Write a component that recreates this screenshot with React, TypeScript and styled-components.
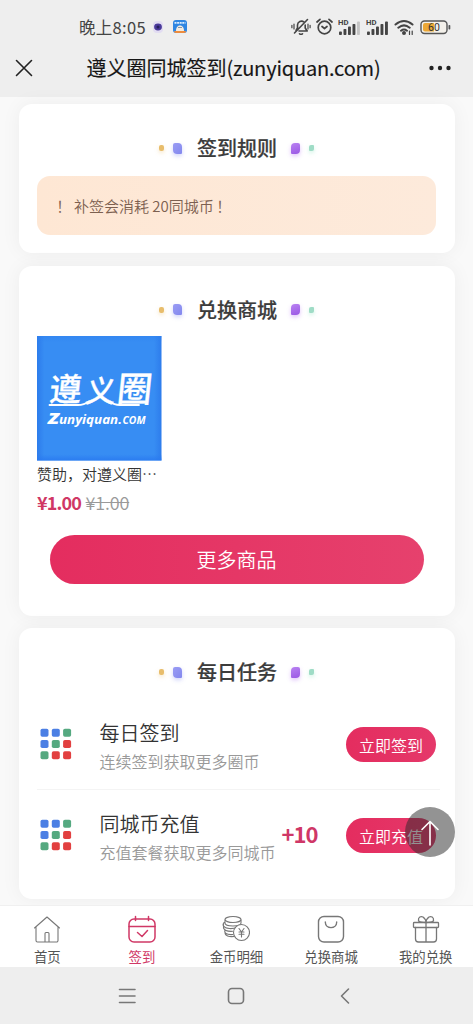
import React from 'react';
import styled, { createGlobalStyle } from 'styled-components';

const cjk = '"Noto Sans CJK SC", "Noto Sans", sans-serif';

const Global = createGlobalStyle`
  * { box-sizing: border-box; }
  body { margin: 0; background: #eee; font-family: ${cjk}; color: #333; }
  button { font-family: inherit; border: 0; padding: 0; }
`;

const Screen = styled.div`
  width: 473px;
  height: 1024px;
  display: flex;
  flex-direction: column;
  overflow: hidden;
  background: #eee;
`;

const StatusBar = styled.div`
  height: 46px;
  padding: 8px 22px 0 79px;
  display: flex;
  justify-content: space-between;
  align-items: center;
`;

const StatusGroup = styled.div<{ $gap: number }>`
  display: flex;
  align-items: center;
  gap: ${(p) => p.$gap}px;
`;

const Clock = styled.span`
  font-size: 16.5px;
  line-height: 20px;
  letter-spacing: 0.3px;
  color: #444;
  margin-right: -3px;
`;

const TitleBar = styled.header`
  height: 51px;
  padding: 0 21px 7px 15px;
  display: grid;
  grid-template-columns: 24px 1fr 24px;
  align-items: center;
`;

const PageTitle = styled.h1`
  margin: 0;
  font-size: 20px;
  line-height: 28px;
  font-weight: 400;
  color: #161616;
  text-align: center;
  white-space: nowrap;
  -webkit-text-stroke: 0.15px #161616;
`;

const Domain = styled.span`
  letter-spacing: -0.18px;
`;

const Content = styled.main`
  height: 808px;
  padding: 7px 18.5px 0 18.5px;
  display: flex;
  flex-direction: column;
  gap: 12.5px;
  background: #f9f9f9;
`;

const Card = styled.section<{ $h: number }>`
  height: ${(p) => p.$h}px;
  flex: none;
  padding: 30px 18.5px 0;
  border-radius: 13px;
  background: #fff;
  box-shadow: 0 0 20px rgba(0, 0, 0, 0.05);
`;

const Heading = styled.div`
  height: 28px;
  display: flex;
  align-items: center;
  justify-content: center;
`;

const HeadingText = styled.h2`
  margin: 0 9.5px 0 10.5px;
  font-size: 20px;
  line-height: 28px;
  font-weight: 500;
  color: #3c3c3c;
  -webkit-text-stroke: 0.2px #3c3c3c;
`;

const Petal = styled.i<{ $w: number; $h: number; $fill: string; $radius: string; $glow: string }>`
  width: ${(p) => p.$w}px;
  height: ${(p) => p.$h}px;
  margin: 0 4.5px;
  border-radius: ${(p) => p.$radius};
  background: ${(p) => p.$fill};
  box-shadow: 0 2px 4px ${(p) => p.$glow};
`;

const Notice = styled.p`
  margin: 14px 0 0;
  height: 59px;
  padding: 0 15.5px 1px;
  display: flex;
  align-items: center;
  border-radius: 13px;
  background: linear-gradient(90deg, #fee7d4, #fdeadb);
  font-size: 15px;
  font-weight: 350;
  letter-spacing: -0.03px;
  color: #7c6050;
  white-space: pre;
`;

const Mark = styled.span`
  font-family: "Noto Sans CJK JP", sans-serif;
`;

const LastMark = styled(Mark)`
  margin-left: -1px;
`;

const Product = styled.article`
  width: 124.5px;
  margin-top: 12.5px;
`;

const Cover = styled.svg`
  display: block;
  width: 124.5px;
  height: 124.5px;
`;

const ProductName = styled.div`
  margin-top: 2.5px;
  font-size: 15px;
  line-height: 22px;
  font-weight: 350;
  color: #333;
  white-space: nowrap;
`;

const Prices = styled.div`
  margin-top: 5px;
  display: flex;
  gap: 4px;
  line-height: 25px;
`;

const Price = styled.span`
  font-size: 18px;
  letter-spacing: -0.85px;
  padding-right: 0.5px;
  font-weight: 700;
  color: #d03765;
`;

const OldPrice = styled.del`
  font-size: 18px;
  letter-spacing: -0.15px;
  font-weight: 350;
  color: #999;
`;

const MoreButton = styled.button`
  display: block;
  width: 374px;
  height: 49.5px;
  margin: 19.5px 0 0 12.5px;
  padding-top: 1px;
  border-radius: 25px;
  background: linear-gradient(90deg, #e42d5f, #e6416d);
  color: #fff;
  font-size: 20px;
  font-weight: 350;
`;

const TaskList = styled.div`
  margin-top: 13px;
`;

const Task = styled.div<{ $line?: boolean }>`
  height: 91px;
  margin-right: -4px;
  padding: 0 4px 0 3px;
  display: flex;
  align-items: center;
  border-bottom: 1px solid ${(p) => (p.$line ? '#f4f4f4' : 'transparent')};
`;

const TaskText = styled.div`
  width: 182px;
  margin-left: 27.5px;
  padding-top: 3px;
  white-space: nowrap;
`;

const TaskName = styled.div`
  font-size: 20px;
  line-height: 28px;
  font-weight: 350;
  color: #333;
`;

const TaskHint = styled.div`
  font-size: 16px;
  line-height: 24px;
  margin-top: 2px;
  font-weight: 350;
  color: #999;
`;

const Reward = styled.span`
  margin-top: -4px;
  font-size: 22px;
  line-height: 28px;
  letter-spacing: -1px;
  font-weight: 700;
  color: #cf3767;
`;

const TaskButton = styled.button`
  width: 90px;
  height: 35px;
  margin-left: auto;
  padding-top: 1px;
  border-radius: 18px;
  background: linear-gradient(90deg, #e42d5f, #e5386a);
  color: #fff;
  font-size: 16px;
  font-weight: 350;
`;

const BackTop = styled.button`
  position: absolute;
  left: 405px;
  top: 807px;
  width: 50px;
  height: 50px;
  border-radius: 50%;
  background: rgba(40, 40, 40, 0.5);
  svg { display: block; margin: 1px auto 0; }
`;

const Tabs = styled.nav`
  height: 62px;
  flex: none;
  display: grid;
  grid-template-columns: repeat(5, 1fr);
  border-top: 1px solid #f0f0f0;
  background: #fff;
`;

const Tab = styled.div<{ $active?: boolean }>`
  display: flex;
  flex-direction: column;
  align-items: center;
  padding-top: 9px;
  color: ${(p) => (p.$active ? '#d03866' : '#555')};
  font-size: 13.4px;
  line-height: 20px;
  svg { display: block; color: ${(p) => (p.$active ? '#d03866' : '#777')}; margin-bottom: 3px; }
`;

const SystemNav = styled.div`
  height: 57px;
  flex: none;
  padding: 1px 123px 0 117px;
  display: grid;
  grid-template-columns: 20px 18px 10px;
  justify-content: start;
  column-gap: 90px;
  align-items: center;
  svg:last-child { margin-left: 5px; }
`;

const line = {
  fill: 'none',
  stroke: 'currentColor',
  strokeWidth: 1.3,
  strokeLinecap: 'round' as const,
  strokeLinejoin: 'round' as const,
};

function SectionTitle({ children }: { children: string }) {
  return (
    <Heading>
      <Petal $w={5} $h={6} $fill="#e8bd6c" $radius="2px" $glow="rgba(232,180,90,.35)" />
      <Petal $w={9} $h={11} $fill="linear-gradient(135deg,#9a9cf4,#8388ee)" $radius="2px 4px 1px 4px" $glow="rgba(120,130,240,.35)" />
      <HeadingText>{children}</HeadingText>
      <Petal $w={9} $h={11} $fill="linear-gradient(160deg,#b982f2,#9a57e4)" $radius="4px 2px 4px 1px" $glow="rgba(170,90,240,.35)" />
      <Petal $w={5} $h={6} $fill="#9fdcc6" $radius="2px 1px" $glow="rgba(120,220,180,.35)" />
    </Heading>
  );
}

function Signal({ faded }: { faded?: boolean }) {
  return (
    <svg width="23" height="17" viewBox="0 0 23 17">
      <text x="0" y="6.4" fontSize="7.5" fontWeight="700" fontFamily="Roboto, sans-serif" fill="#444" textLength="10.5" lengthAdjust="spacingAndGlyphs">HD</text>
      {[0, 1, 2, 3, 4].map((i) => (
        <rect key={i} x={1 + i * 4.5} y={12.5 - i * 2.5} width="2.9" height={3.5 + i * 2.5} rx="0.8" fill={faded && i === 4 ? '#c4c4c4' : '#444'} />
      ))}
    </svg>
  );
}

function GridIcon() {
  const b = '#4b7fe4';
  const g = '#55a980';
  const r = '#e24040';
  return (
    <svg width="32" height="32" viewBox="0 0 32 32">
      {[b, b, g, b, g, r, g, r, r].map((c, i) => (
        <rect key={i} x={0.5 + (i % 3) * 11.3} y={0.7 + Math.floor(i / 3) * 11.3} width="8" height="8" rx="1.8" fill={c} />
      ))}
    </svg>
  );
}

function ShopLogo() {
  return (
    <Cover viewBox="0 0 124.5 124.5">
      <defs>
        <linearGradient id="edge" x1="0" x2="1">
          <stop offset="0" stopColor="#2d7cec" />
          <stop offset="0.06" stopColor="#378df3" />
          <stop offset="0.94" stopColor="#378df3" />
          <stop offset="1" stopColor="#2d7cec" />
        </linearGradient>
        <linearGradient id="foot" x1="0" x2="0" y1="0" y2="1">
          <stop offset="0" stopColor="#2f80f0" stopOpacity="0.5" />
          <stop offset="0.05" stopColor="#2f80f0" stopOpacity="0" />
          <stop offset="0.95" stopColor="#2878f0" stopOpacity="0" />
          <stop offset="1" stopColor="#2878f0" stopOpacity="0.8" />
        </linearGradient>
      </defs>
      <rect width="124.5" height="124.5" fill="url(#edge)" />
      <rect width="124.5" height="124.5" fill="url(#foot)" />
      <g fill="#fff">
        <g transform="translate(13 65) skewX(-6)" fontFamily={cjk} fontWeight="500" stroke="#fff" strokeWidth="0.3">
          <text x="-1.500" y="-0.500" fontSize="32">遵</text>
          <text x="34.500" y="0.500" fontSize="30">义</text>
          <text x="66" y="1" fontSize="35">圈</text>
        </g>
        <path d="M12.500 69H41Q47 69 52 65.500M73 65.500Q77 69 83 69H102" fill="none" stroke="#fff" strokeWidth="1.800" strokeLinecap="round" />
        <g fontFamily="Open Sans, sans-serif" fontWeight="700" fontStyle="italic">
          <text x="11" y="87.500" fontSize="16" fontWeight="800" textLength="11" lengthAdjust="spacingAndGlyphs">Z</text>
          <text x="22" y="87.500" fontSize="11.500" textLength="63" lengthAdjust="spacingAndGlyphs">unyiquan.</text>
          <text x="85.500" y="87.500" fontSize="10" textLength="23" lengthAdjust="spacingAndGlyphs">COM</text>
        </g>
      </g>
    </Cover>
  );
}

export default function App() {
  return (
    <Screen>
      <Global />
      <StatusBar>
        <StatusGroup $gap={10}>
          <Clock>晚上8:05</Clock>
          <svg width="10" height="12" viewBox="0 0 10 12">
            <rect width="10" height="12" rx="4" fill="#e2dcf2" />
            <ellipse cx="5" cy="6" rx="3.9" ry="3.4" fill="#4a3a9a" />
            <circle cx="5" cy="6" r="1.5" fill="#251f5c" />
          </svg>
          <svg width="14" height="14" viewBox="0 0 14 14">
            <rect width="14" height="13" rx="3" fill="#2f86e2" />
            <path d="M1.500 2.800h11" stroke="#d8ecff" strokeWidth="1.800" strokeDasharray="2 .6" />
            <path d="M3 11c0-4 2-5.500 4-5.500s4 1.500 4 5.500z" fill="#f4ebdf" />
            <path d="M5 7.500h4" stroke="#8297ad" />
            <path d="M1 11h12v0a2 2 0 0 1-2 2H3a2 2 0 0 1-2-2z" fill="#ed8c3e" />
          </svg>
        </StatusGroup>
        <StatusGroup $gap={5}>
          <svg width="20" height="18" viewBox="0 0 20 18" {...line} color="#444" strokeWidth="1.6">
            <path d="M5 12.500 6.500 10V7a4 4 0 0 1 6.500-3M14.200 7v3l2 3H8M8.500 15.800q1.500 1 3 0M3.500 15 16.500 1.500" />
            <path d="M3 6v5M.9 7.300v2.400M17 6v5M19.100 7.300v2.400" strokeWidth="1.2" />
          </svg>
          <svg width="17" height="18" viewBox="0 0 17 18" {...line} color="#444" strokeWidth="1.7">
            <circle cx="8.500" cy="9.500" r="6.300" />
            <path d="m6 8.500 2.500 2 2.500-2M1 4l3-2.700M16 4l-3-2.700" />
          </svg>
          <Signal faded />
          <Signal />
          <svg width="21" height="17" viewBox="0 0 21 17" {...line} color="#444" strokeWidth="2">
            <path d="M1.500 5.500q8.500-7 17 0M4.300 8.700q5.700-4.700 11.400 0M7 11.700q3-2.300 6 0" />
            <circle cx="10" cy="14" r="1" fill="#444" />
            <path d="M15.500 12v3.500M18.200 12v3.500" strokeWidth="1.2" />
          </svg>
          <svg width="31" height="15" viewBox="0 0 31 15">
            <rect x="1" y="1" width="26" height="12.500" rx="3.500" fill="#f3f0ea" stroke="#555" strokeWidth="1.400" />
            <path d="M5 3h9v8.500H5a2 2 0 0 1-2-2V5a2 2 0 0 1 2-2z" fill="#eba735" />
            <rect x="28.500" y="5" width="1.800" height="4.500" rx=".8" fill="#555" />
            <text x="14" y="11" fontSize="10.500" fontFamily="Roboto, sans-serif" textAnchor="middle" fill="#333">60</text>
          </svg>
        </StatusGroup>
      </StatusBar>

      <TitleBar>
        <svg width="18" height="18" viewBox="0 0 18 18" {...line} color="#222" strokeWidth="1.6">
          <path d="m1.500 1.500 15 15M16.500 1.500l-15 15" />
        </svg>
        <PageTitle>
          遵义圈同城签到<Domain>(zunyiquan.com)</Domain>
        </PageTitle>
        <svg width="24" height="6" viewBox="0 0 24 6" fill="#222">
          <circle cx="3.500" cy="3" r="2.200" />
          <circle cx="12" cy="3" r="2.200" />
          <circle cx="20.500" cy="3" r="2.200" />
        </svg>
      </TitleBar>

      <Content>
        <Card $h={149}>
          <SectionTitle>签到规则</SectionTitle>
          <Notice>
            <Mark>！</Mark>
            {'  补签会消耗 20同城币'}
            <LastMark>！</LastMark>
          </Notice>
        </Card>

        <Card $h={350}>
          <SectionTitle>兑换商城</SectionTitle>
          <Product>
            <ShopLogo />
            <ProductName>赞助，对遵义圈⋯</ProductName>
            <Prices>
              <Price>¥1.00</Price>
              <OldPrice>¥1.00</OldPrice>
            </Prices>
          </Product>
          <MoreButton>更多商品</MoreButton>
        </Card>

        <Card $h={270.5}>
          <SectionTitle>每日任务</SectionTitle>
          <TaskList>
            <Task $line>
              <GridIcon />
              <TaskText>
                <TaskName>每日签到</TaskName>
                <TaskHint>连续签到获取更多圈币</TaskHint>
              </TaskText>
              <TaskButton>立即签到</TaskButton>
            </Task>
            <Task>
              <GridIcon />
              <TaskText>
                <TaskName>同城币充值</TaskName>
                <TaskHint>充值套餐获取更多同城币</TaskHint>
              </TaskText>
              <Reward>+10</Reward>
              <TaskButton>立即充值</TaskButton>
            </Task>
          </TaskList>
        </Card>
      </Content>

      <Tabs>
        <Tab>
          <svg width="28" height="28" viewBox="0 0 28 28" {...line} strokeWidth="1.1">
            <path d="M1.500 13 14 2l12.500 11M3 12v13.500a1.500 1.500 0 0 0 1.500 1.500h19a1.500 1.500 0 0 0 1.500-1.500V12M12 27v-8.500a1 1 0 0 1 1-1h2a1 1 0 0 1 1 1V27" />
          </svg>
          首页
        </Tab>
        <Tab $active>
          <svg width="28" height="28" viewBox="0 0 28 28" {...line} strokeWidth="1.5">
            <rect x="1" y="4" width="26" height="23" rx="5" />
            <path d="M1 11.500h26M7.500 1.500v4M20.500 1.500v4M9.500 17.500l4.500 4 5.500-6" />
          </svg>
          签到
        </Tab>
        <Tab>
          <svg width="28" height="28" viewBox="0 0 28 28" {...line} strokeWidth="1.1">
            <ellipse cx="11" cy="4.500" rx="8" ry="3" />
            <path d="M3 5v3c0 4 16 4 16 0V5M3 7c-2 1-2.500 2-1.500 4 2 3 9 3.500 14 1M1.500 9v4c1 3 5 3.500 9 3.300M3 15c-1 3 1 5 8 4.500M3 17.500c0 3.500 4 4.500 9 4" />
            <circle cx="19.500" cy="17.500" r="8" fill="#fff" />
            <path d="m17 13.500 2.500 3.500 2.500-3.500M19.500 17v5M17 17h5M17 19.300h5" />
          </svg>
          金币明细
        </Tab>
        <Tab>
          <svg width="28" height="28" viewBox="0 0 28 28" {...line} strokeWidth="1.4">
            <rect x="1.500" y="1.500" width="25" height="25.500" rx="5.500" />
            <path d="M8.300 7c0 7.500 11.400 7.500 11.400 0" />
          </svg>
          兑换商城
        </Tab>
        <Tab>
          <svg width="28" height="28" viewBox="0 0 28 28" {...line} strokeWidth="1.3">
            <rect x="1.500" y="7.500" width="25" height="5" rx=".8" />
            <path d="M3.500 12.500V24a3 3 0 0 0 3 3h15a3 3 0 0 0 3-3V12.500M14 7.500V27M14 7.500C12 7 7 8 6.500 5.500 6 2 9 1 11 2c2 1.500 3 3.500 3 5.500zM14 7.500c2-.5 7 .5 7.500-2C22 2 19 1 17 2c-2 1.500-3 3.500-3 5.500z" />
          </svg>
          我的兑换
        </Tab>
      </Tabs>

      <SystemNav>
        <svg width="20" height="20" viewBox="0 0 20 20" {...line} color="#777" strokeWidth="1.6">
          <path d="M2.500 3.500h15.500M2.500 10h15.500M2.500 16.500h15.500" />
        </svg>
        <svg width="18" height="18" viewBox="0 0 18 18" {...line} color="#777" strokeWidth="1.6">
          <rect x="1.500" y="1.500" width="15" height="15" rx="3.500" />
        </svg>
        <svg width="10" height="18" viewBox="0 0 10 18" {...line} color="#777" strokeWidth="1.6">
          <path d="M8.500 2 1.500 9l7 7" />
        </svg>
      </SystemNav>

      <BackTop aria-label="回到顶部">
        <svg width="20" height="26" viewBox="0 0 20 26" {...line} color="#fff" strokeWidth="1.600">
          <path d="M10 25V1.500M2 9.500l8-8 8 8" />
        </svg>
      </BackTop>
    </Screen>
  );
}
